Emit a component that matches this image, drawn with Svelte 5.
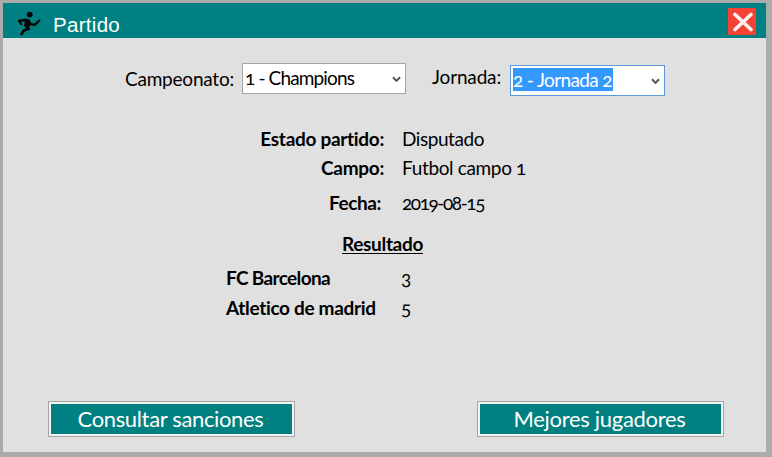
<script>
  const details = [
    { label: 'Estado partido:', lw: 124, value: 'Disputado', vw: 82, top: 0, end: 0 },
    { label: 'Campo:', lw: 63, value: 'Futbol campo 1', vw: 124, top: 5, end: 0 },
    { label: 'Fecha:', lw: 52, value: '2019-08-15', vw: 82, top: 11, end: 3 }
  ];
  const scores = [
    { team: 'FC Barcelona', tw: 104, goals: '3' },
    { team: 'Atletico de madrid', tw: 150, goals: '5' }
  ];

  // Tracks a run of text so that it fills the given width.
  function fit(node, width) {
    const natural = node.getBoundingClientRect().width;
    node.style.letterSpacing = (width - natural) / node.textContent.length + 'px';
  }
</script>

<div class="window">
  <header>
    <svg class="runner" width="26" height="28" viewBox="0 0 26 28">
      <circle cx="13.7" cy="6.6" r="2.9" />
      <path d="M2 12L8.5 10.5L13 11.2L15.4 15L18 15.7L23.5 11.2L24.7 12.4L19 18.3L15 17.2L13.2 18.8L14.5 21.6L9 23.4L6.2 27.6L3.8 26.8L6.5 21.8L9.8 20.2L8 17.6L8.8 13.4L5 13.8L6.8 16.6L5 17.4L2 13.3Z" />
    </svg>
    <h1>Partido</h1>
    <button class="close" aria-label="Cerrar">
      <svg width="28" height="27" viewBox="0 0 28 27">
        <path d="M7 6.5L23 21.5M23 6.5L7 21.5" />
      </svg>
    </button>
  </header>

  <main>
    <div class="filters">
      <span class="name first"><span class="run" use:fit={109}>Campeonato:</span></span>
      <div class="combo champ">
        <span class="run" use:fit={109}>1 - Champions</span>
        <svg width="9" height="7" viewBox="0 0 9 7"><path d="M1 1.2L4.5 4.9L8 1.2" /></svg>
      </div>
      <span class="name second"><span class="run" use:fit={69}>Jornada:</span></span>
      <div class="combo round">
        <span class="selected"><span class="run" use:fit={99}>2 - Jornada 2</span></span>
        <svg width="9" height="7" viewBox="0 0 9 7"><path d="M1 1.2L4.5 4.9L8 1.2" /></svg>
      </div>
    </div>

    <dl>
      {#each details as d}
        <div class="detail" style="margin-top: {d.top}px">
          <dt style="padding-right: {d.end}px"><span class="run" use:fit={d.lw}>{d.label}</span></dt>
          <dd><span class="run" use:fit={d.vw}>{d.value}</span></dd>
        </div>
      {/each}
    </dl>

    <h2><span class="run" use:fit={81}>Resultado</span></h2>

    <div class="scores">
      {#each scores as s}
        <div class="score">
          <b><span class="run" use:fit={s.tw}>{s.team}</span></b>
          <span class="goals">{s.goals}</span>
        </div>
      {/each}
    </div>

    <footer>
      <button class="action"><span class="run" use:fit={186}>Consultar sanciones</span></button>
      <button class="action"><span class="run" use:fit={172}>Mejores jugadores</span></button>
    </footer>
  </main>
</div>

<style>
  :global(body) { margin: 0; }
  .window {
    box-sizing: border-box;
    width: 772px;
    height: 457px;
    border: solid #ababab;
    border-width: 3px 6px 5px 3px;
    background: #e0e0e0;
    color: #000;
    display: flex;
    flex-direction: column;
    font: 19px/24px Candara, Lato, "Noto Sans", sans-serif;
    font-variant-numeric: oldstyle-nums;
    white-space: nowrap;
  }
  header {
    height: 35px;
    background: #008080;
    display: flex;
    align-items: flex-start;
    padding-left: 13px;
    padding-right: 10px;
  }
  .runner { margin-top: 5px; fill: #050505; }
  h1 {
    margin: 9px 0 0 11px;
    font: 20.5px/26px "Liberation Sans", Arial, sans-serif;
    letter-spacing: 0.3px;
    color: #fff;
  }
  .close {
    margin: 5px 0 0 auto;
    padding: 0;
    border: 0;
    width: 28px;
    height: 27px;
    background: #f44336;
  }
  .close svg { display: block; fill: none; stroke: #fff2f2; stroke-width: 3.6; stroke-linecap: round; }
  .run { display: inline-block; }
  main { flex: 1; display: flex; flex-direction: column; }
  .filters { display: flex; align-items: flex-start; padding-top: 25px; height: 33px; }
  .first { width: 117px; margin: 4px 0 0 122px; }
  .second { width: 78px; margin: 2px 0 0 26px; }
  .combo {
    box-sizing: border-box;
    height: 31px;
    border: 1px solid #a5a5a5;
    background: #fff;
    display: flex;
    align-items: center;
    justify-content: space-between;
    padding: 0 4px 0 2px;
  }
  .combo > .run { margin-top: -1px; }
  .combo svg { fill: none; stroke: #555; stroke-width: 2; margin-top: 1px; }
  .champ { width: 164px; }
  .round { width: 155px; margin-top: 2px; border-color: #5b96db; }
  .selected { height: 23px; line-height: 23px; width: 100px; background: #3399ff; color: #fff; margin-top: -2px; }
  dl { margin: 31px 0 0; }
  .detail { display: flex; height: 24px; }
  dt { box-sizing: border-box; width: 381px; text-align: right; font-weight: bold; }
  dd { margin: 0 0 0 18px; }
  h2 {
    margin: 17px 0 0 339px;
    font-size: 19px;
    line-height: 24px;
  }
  h2 .run { text-decoration: underline; text-decoration-thickness: 1px; text-underline-offset: 2px; }
  .scores { margin: 10px 0 0 223px; display: flex; flex-direction: column; gap: 6px; }
  .score { display: flex; height: 24px; }
  .score b { width: 175px; }
  .goals { line-height: 23px; }
  footer { margin-top: auto; display: flex; justify-content: space-between; padding: 0 42px 15px 45px; }
  .action {
    box-sizing: border-box;
    width: 247px;
    height: 36px;
    padding: 0 2px 0 0;
    border: 1px solid #a6a6a6;
    background: #008080;
    box-shadow: inset 0 0 0 2px #f3f3f3;
    color: #fff;
    font: 22px/30px Candara, Lato, "Noto Sans", sans-serif;
  }
</style>
